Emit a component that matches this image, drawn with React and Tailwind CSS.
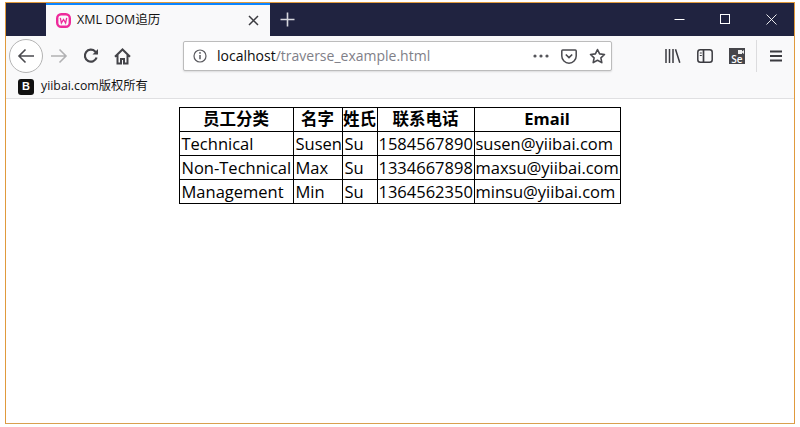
const rows = [
  ["Technical", "Susen", "Su", "1584567890", "susen@yiibai.com"],
  ["Non-Technical", "Max", "Su", "1334667898", "maxsu@yiibai.com"],
  ["Management", "Min", "Su", "1364562350", "minsu@yiibai.com"],
];
const heads = ["员工分类", "名字", "姓氏", "联系电话", "Email"];
const widths = ["w-[114px]", "w-[49px]", "w-[35px]", "w-[97px]", "w-[146px]"];
const pads = ["pl-[2px]", "pl-[2px]", "pl-[2px]", "pl-[1px]", "pl-[1px]"];
const F = "font-['Open_Sans','Noto_Sans_CJK_SC',sans-serif]";

export default function App() {
  return (
    <div className={`h-[427px] w-[800px] bg-white pt-[2px] pr-[5px] pb-[3px] pl-[5px] ${F}`}>
      <div className="flex h-full flex-col border border-[#e09a3c] border-b-[#d9a050]">
        {/* Tab bar */}
        <div className="flex h-[33px] items-stretch bg-[#202340]">
          <div className="w-[40px]" />
          <div className="flex w-[224px] items-center border-t-2 border-t-[#0a84ff] bg-[#f9f9fa] pl-[10px] pr-[11px]">
            <svg width="15" height="15" viewBox="0 0 15 15" fill="none">
              <rect x="1.200" y="1.200" width="12.600" height="12.600" rx="4" stroke="#ee2a9b" strokeWidth="2.400" />
              <path d="M4.300 4.800l1.100 5.200L7.500 6.500 9.600 10l1.100-5.200" stroke="#ee2a9b" strokeWidth="1.300" />
            </svg>
            <span className="ml-[6px] text-[12.500px] leading-none text-[#111]">XML DOM追历</span>
            <svg className="ml-auto" width="11" height="11" viewBox="0 0 11 11" fill="none">
              <path d="M1 1l9 9M10 1l-9 9" stroke="#3c3c40" strokeWidth="1.500" />
            </svg>
          </div>
          <div className="flex w-[35px] items-center justify-center pb-[1px]">
            <svg width="15" height="15" viewBox="0 0 15 15" fill="none">
              <path d="M7.500 0.500v14M0.500 7.500h14" stroke="#d6d7dd" strokeWidth="1.600" />
            </svg>
          </div>
          <div className="ml-auto flex items-center">
            <div className="flex w-[46px] justify-center pb-[1px]">
              <svg width="11" height="11" viewBox="0 0 11 11" fill="none"><path d="M0.500 5.500h10" stroke="#fff" /></svg>
            </div>
            <div className="flex w-[46px] justify-center pb-[1px]">
              <svg width="10" height="10" viewBox="0 0 10 10" fill="none"><rect x="0.500" y="0.500" width="9" height="9" stroke="#fff" /></svg>
            </div>
            <div className="flex w-[46px] justify-center pb-[1px]">
              <svg width="11" height="11" viewBox="0 0 11 11" fill="none"><path d="M0.500 0.500l10 10M10.500 0.500l-10 10" stroke="#fff" strokeWidth="0.900" /></svg>
            </div>
          </div>
        </div>

        {/* Nav bar */}
        <div className="flex h-[40px] items-center bg-[#f9f9fa] pl-[3px]">
          <div className="flex h-[34px] w-[34px] items-center justify-center rounded-full border border-[#b4b4b4] bg-white">
            <svg width="18" height="16" viewBox="0 0 18 16" fill="none">
              <path d="M17 8H2M8.500 1.500L2 8l6.500 6.500" stroke="#4a4a4f" strokeWidth="1.600" />
            </svg>
          </div>
          <svg className="ml-[7px]" width="18" height="16" viewBox="0 0 18 16" fill="none">
            <path d="M1 8h15M9.500 1.500L16 8l-6.500 6.500" stroke="#b1b1b3" strokeWidth="1.600" />
          </svg>
          <svg className="ml-[15px]" width="16" height="16" viewBox="0 0 16 16" fill="none">
            <path d="M13.600 9.500A6 6 0 1 1 12.200 3.500L14.500 5.500" stroke="#444449" strokeWidth="2.200" />
            <path d="M15 1v5.500H9.500z" fill="#444449" />
          </svg>
          <svg className="ml-[15px]" width="17" height="17" viewBox="0 0 17 17" fill="none">
            <path d="M1 8.800L8.500 1.500 16 8.800M3.500 7v8.500h3.500v-4.500h3v4.500h3.500V7" stroke="#444449" strokeWidth="2" />
          </svg>

          <div className="ml-[52px] flex h-[30px] w-[429px] items-center rounded-[2px] border border-[#bcbcbc] bg-white pl-[9px] pr-[5px] shadow-[0_1px_2px_rgba(0,0,0,0.12)]">
            <svg width="14" height="14" viewBox="0 0 14 14" fill="none">
              <circle cx="7" cy="7" r="6" stroke="#5a5a5f" strokeWidth="1.200" />
              <path d="M7 6v4.200" stroke="#5a5a5f" strokeWidth="1.500" />
              <circle cx="7" cy="3.900" r="0.900" fill="#5a5a5f" />
            </svg>
            <span className="ml-[10px] text-[14px] leading-none whitespace-nowrap text-[#0c0c0d]">
              localhost<span className="text-[#7f8088]">/traverse_example.html</span>
            </span>
            <div className="ml-auto flex items-center">
              <svg width="16" height="4" viewBox="0 0 16 4"><circle cx="2" cy="2" r="1.600" fill="#55555a" /><circle cx="8" cy="2" r="1.600" fill="#55555a" /><circle cx="14" cy="2" r="1.600" fill="#55555a" /></svg>
              <svg className="ml-[12px]" width="16" height="15" viewBox="0 0 16 15" fill="none">
                <path d="M1.700 1h12.600a.9.9 0 0 1 .9.9V7a7.200 7.200 0 0 1-14.400 0V1.900a.9.9 0 0 1 .9-.9z" stroke="#4a4a4f" strokeWidth="1.500" />
                <path d="M4.800 5.500L8 8.500l3.200-3" stroke="#4a4a4f" strokeWidth="1.700" />
              </svg>
              <svg className="ml-[12px]" width="17" height="16" viewBox="0 0 17 16" fill="none">
                <path d="M8.500 1.500l2.100 4.400 4.900.6-3.600 3.300.9 4.800-4.300-2.400-4.300 2.400.9-4.800L1.500 6.500l4.900-.6z" stroke="#4a4a4f" strokeWidth="1.600" strokeLinejoin="round" />
              </svg>
            </div>
          </div>

          <svg className="ml-[53px]" width="16" height="14" viewBox="0 0 16 14" fill="none">
            <path d="M1 0v14M4.500 0v14M8 0v14M10.500 0.300l4.300 13.500" stroke="#3b3b40" strokeWidth="1.500" />
          </svg>
          <svg className="ml-[16px]" width="16" height="14" viewBox="0 0 16 14" fill="none">
            <rect x="0.800" y="0.800" width="14.400" height="12.400" rx="2.500" stroke="#3b3b40" strokeWidth="1.500" />
            <path d="M6.500 1v12" stroke="#3b3b40" strokeWidth="1.700" />
            <path d="M2.800 4h2M2.800 6.500h2" stroke="#3b3b40" />
          </svg>
          <div className="relative ml-[16px] flex h-[16px] w-[16px] flex-col items-center justify-end bg-[#46464b]">
            <svg className="absolute top-[2px] right-[1px]" width="6" height="4" viewBox="0 0 6 4">
              <path d="M0 0h4v4H0zM4 1.500L6 0v4L4 2.500z" fill="#f0f0f0" />
            </svg>
            <span className="font-['Open_Sans',sans-serif] text-[10px] leading-[10px] font-semibold text-white">Se</span>
          </div>
          <div className="ml-[11px] h-[32px] w-px bg-[#dcdcde]" />
          <svg className="ml-[13px]" width="12" height="12" viewBox="0 0 12 12" fill="none">
            <path d="M0 1.500h12M0 6h12M0 10.500h12" stroke="#3b3b40" strokeWidth="1.800" />
          </svg>
        </div>

        {/* Bookmarks */}
        <div className="flex h-[23px] items-center border-b border-b-[#e0e0e2] bg-[#f9f9fa] pl-[12px] pb-[1px]">
          <div className="flex h-[16px] w-[16px] items-center justify-center rounded-[3px] bg-[#111]">
            <span className="font-['Liberation_Sans',sans-serif] text-[11px] leading-none font-bold text-white">B</span>
          </div>
          <span className="ml-[7px] text-[12.300px] leading-none text-[#111]">yiibai.com版权所有</span>
        </div>

        {/* Page */}
        <div className="flex flex-1 justify-center bg-white pt-[8px] pr-[1px]">
          <table className="h-[97px] w-[442px] table-fixed border-collapse self-start text-[16.500px] text-black">
            <thead>
              <tr className="h-[24px]">
                {heads.map((h, i) => (
                  <th key={h} className={`border border-black p-0 text-center leading-none font-bold ${widths[i]}`}>{h}</th>
                ))}
              </tr>
            </thead>
            <tbody>
              {rows.map((r) => (
                <tr key={r[0]} className="h-[24px]">
                  {r.map((c, i) => (
                    <td key={c} className={`border border-black py-0 pt-[1px] pr-0 leading-none whitespace-nowrap ${pads[i]}`}>{c}</td>
                  ))}
                </tr>
              ))}
            </tbody>
          </table>
        </div>
      </div>
    </div>
  );
}
